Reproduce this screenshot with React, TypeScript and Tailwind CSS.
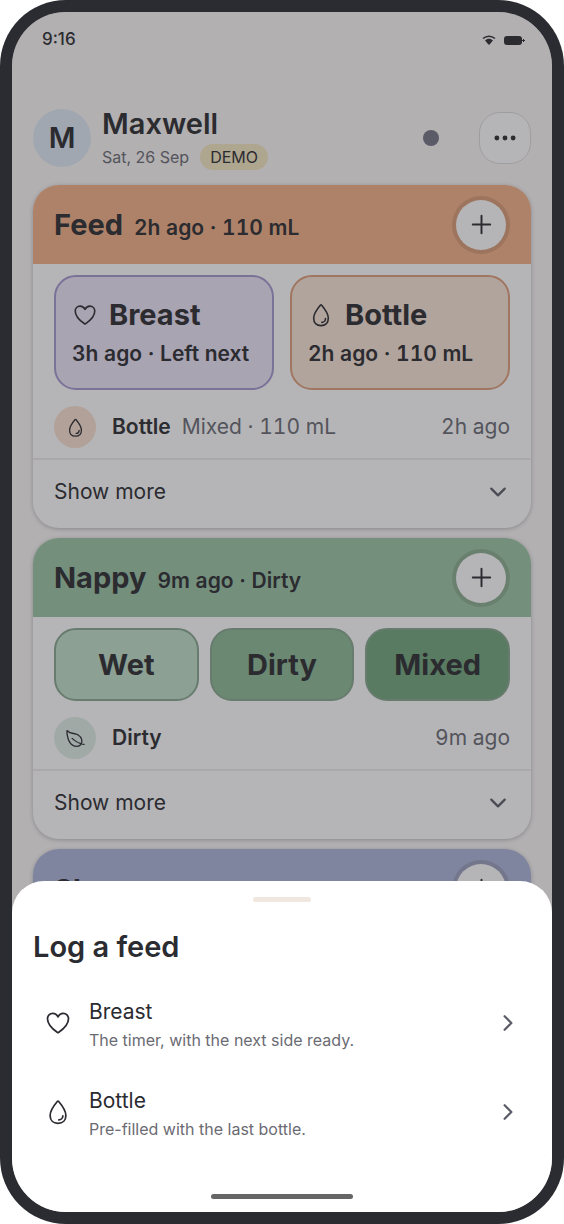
import React from 'react';
import {
  IoAdd,
  IoChevronDown,
  IoChevronForward,
  IoEllipsisHorizontal,
  IoHeartOutline,
  IoLeafOutline,
  IoWaterOutline
} from 'react-icons/io5';

interface TrackerCardProps {
  title: string;
  summary?: string;
  headerClass: string;
  children?: React.ReactNode;
}

const TrackerCard: React.FC<TrackerCardProps> = ({ title, summary, headerClass, children }) => (
  <section className="shrink-0 overflow-hidden rounded-[26px] bg-white shadow-[0_1px_4px_rgba(0,0,0,0.25)]">
    <div className={`flex h-[79px] items-center justify-between px-[21px] ${headerClass}`}>
      <div className="flex items-baseline gap-[11px] pt-0.5">
        <h2 className="text-[29px] leading-9 font-bold">{title}</h2>
        {summary && <span className="text-[21px] font-semibold tabular-nums">{summary}</span>}
      </div>
      <button
        aria-label={`Add ${title}`}
        className="mr-1 flex h-[50px] w-[50px] items-center justify-center rounded-full bg-white shadow-[0_0_0_4px_rgba(60,30,20,0.14)]"
      >
        <IoAdd size={31} />
      </button>
    </div>
    {children}
  </section>
);

interface LastEntryProps {
  icon: React.ReactNode;
  iconClass: string;
  label: string;
  detail?: string;
  time: string;
}

const LastEntry: React.FC<LastEntryProps> = ({ icon, iconClass, label, detail, time }) => (
  <div className="mt-4 flex items-center px-[21px] text-[21px] leading-7 tabular-nums">
    <span className={`mr-4 flex h-[42px] w-[42px] items-center justify-center rounded-full ${iconClass}`}>
      {icon}
    </span>
    <span className="font-semibold">{label}</span>
    {detail && <span className="ml-[11px] text-[#6b6b73]">{detail}</span>}
    <span className="ml-auto text-[#6b6b73]">{time}</span>
  </div>
);

const ShowMore = () => (
  <button className="mt-2.5 flex w-full items-center justify-between border-t-2 border-[#efecea] px-[21px] pt-[18px] pb-[22px] text-[21px] leading-7">
    Show more
    <IoChevronDown size={24} className="text-[#5c5c68]" />
  </button>
);

interface FeedTileProps {
  icon: React.ReactNode;
  title: string;
  detail: string;
  tileClass: string;
}

const FeedTile: React.FC<FeedTileProps> = ({ icon, title, detail, tileClass }) => (
  <button className={`h-[115px] flex-1 rounded-[22px] border-2 px-4 text-left ${tileClass}`}>
    <span className="flex items-center gap-[11px] text-[29px] leading-9 font-bold">
      {icon}
      {title}
    </span>
    <span className="mt-[7px] block text-[21px] leading-7 font-semibold tabular-nums">{detail}</span>
  </button>
);

interface SheetOptionProps {
  icon: React.ReactNode;
  title: string;
  detail: string;
}

const SheetOption: React.FC<SheetOptionProps> = ({ icon, title, detail }) => (
  <button className="flex h-[89px] w-full items-center px-[11px] text-left">
    {icon}
    <span className="ml-[17px] flex-1 pt-1">
      <span className="block text-[21px] leading-7">{title}</span>
      <span className="mt-0.5 block text-base leading-6 text-[#6b6b73]">{detail}</span>
    </span>
    <IoChevronForward size={24} className="text-[#5c5c68]" />
  </button>
);

const nappyTypes = [
  { label: 'Wet', className: 'bg-[#c1e0ca]' },
  { label: 'Dirty', className: 'bg-[#8cba95]' },
  { label: 'Mixed', className: 'bg-[#70a67c]' }
];

const StatusBar = () => (
  <div className="flex h-14 shrink-0 items-center justify-between pr-[6px] pl-[9px]">
    <span className="text-[17px] font-medium">9:16</span>
    <div className="flex items-center gap-2">
      <svg width="14" height="10" viewBox="0 0 14 10" fill="none" stroke="currentColor">
        <path d="M1 3.5C4.4 0.4 9.6 0.4 13 3.5" strokeWidth="1.5" />
        <path d="M7 9.5C5.8 9.5 5.6 8.2 4.8 7.4L3 5.6C5.4 3.2 8.6 3.2 11 5.6L9.2 7.4C8.4 8.2 8.2 9.5 7 9.5Z" fill="currentColor" stroke="none" />
      </svg>
      <svg width="21" height="9" viewBox="0 0 21 9" fill="currentColor">
        <rect width="18" height="9" rx="3" />
        <rect x="17" y="4" width="4" height="1" />
        <rect x="19" y="3" width="1" height="3" />
      </svg>
    </div>
  </div>
);

const App: React.FC = () => {
  return (
    <div className="h-screen w-full rounded-[66px] bg-[#2b2c31] p-3 font-[Inter,sans-serif] text-[#2b2c31]">
      <div className="relative h-full overflow-hidden rounded-[54px] bg-[#faf7f6]">
        <main className="flex h-full flex-col px-[21px]">
          <StatusBar />

          <header className="mt-[41px] flex h-[58px] shrink-0 items-center">
            <div className="flex h-[58px] w-[58px] items-center justify-center rounded-full bg-[#dfeaf6] text-[29px] font-semibold">
              M
            </div>
            <div className="ml-[11px] flex-1">
              <h1 className="text-[29px] leading-9 font-semibold">Maxwell</h1>
              <div className="mt-0.5 flex items-center gap-[11px] text-base leading-[26px]">
                <span className="text-[#6b6b73]">Sat, 26 Sep</span>
                <span className="rounded-full bg-[#f6e8c4] px-2.5">DEMO</span>
              </div>
            </div>
            <span className="mr-10 h-4 w-4 rounded-full bg-[#757384]" />
            <button
              aria-label="More options"
              className="flex h-[52px] w-[52px] items-center justify-center rounded-[21px] border border-[#dedad8] bg-white"
            >
              <IoEllipsisHorizontal size={26} />
            </button>
          </header>

          <div className="mt-[18px] flex flex-col gap-2.5">
            <TrackerCard title="Feed" summary="2h ago · 110 mL" headerClass="bg-[#f5b186]">
              <div className="flex gap-4 px-[21px] pt-[11px]">
                <FeedTile
                  icon={<IoHeartOutline size={26} />}
                  title="Breast"
                  detail="3h ago · Left next"
                  tileClass="border-[#a698d0] bg-[#ebe5f8]"
                />
                <FeedTile
                  icon={<IoWaterOutline size={26} />}
                  title="Bottle"
                  detail="2h ago · 110 mL"
                  tileClass="border-[#df9f7c] bg-[#f9e5d8]"
                />
              </div>
              <LastEntry
                icon={<IoWaterOutline size={21} />}
                iconClass="bg-[#f9e0d0]"
                label="Bottle"
                detail="Mixed · 110 mL"
                time="2h ago"
              />
              <ShowMore />
            </TrackerCard>

            <TrackerCard title="Nappy" summary="9m ago · Dirty" headerClass="bg-[#9bc6a6]">
              <div className="grid grid-cols-3 gap-[11px] px-[21px] pt-[11px]">
                {nappyTypes.map((type) => (
                  <button
                    key={type.label}
                    className={`h-[73px] rounded-[22px] border-2 border-[#88a890] text-[29px] font-bold ${type.className}`}
                  >
                    {type.label}
                  </button>
                ))}
              </div>
              <LastEntry
                icon={<IoLeafOutline size={21} />}
                iconClass="bg-[#dfede3]"
                label="Dirty"
                time="9m ago"
              />
              <ShowMore />
            </TrackerCard>

            <TrackerCard title="Sleep" headerClass="bg-[#acb5da]" />
          </div>
        </main>

        {/* Dimmed backdrop with the sheet docked at the bottom */}
        <div className="absolute inset-0 flex flex-col justify-end bg-[#2b2c31]/35">
          <div role="dialog" aria-labelledby="sheet-title" className="rounded-t-[32px] bg-white px-[21px] pt-4 pb-[13px]">
            <div className="mx-auto h-[5px] w-[58px] rounded-full bg-[#f0e8e0]" />
            <h2 id="sheet-title" className="mt-[27px] mb-[13px] text-[29px] leading-9 font-semibold">
              Log a feed
            </h2>
            <SheetOption
              icon={<IoHeartOutline size={28} />}
              title="Breast"
              detail="The timer, with the next side ready."
            />
            <SheetOption
              icon={<IoWaterOutline size={28} />}
              title="Bottle"
              detail="Pre-filled with the last bottle."
            />
            <div className="mx-auto mt-[38px] h-[5px] w-[142px] rounded-full bg-[#666666]" />
          </div>
        </div>
      </div>
    </div>
  );
};

export default App;
